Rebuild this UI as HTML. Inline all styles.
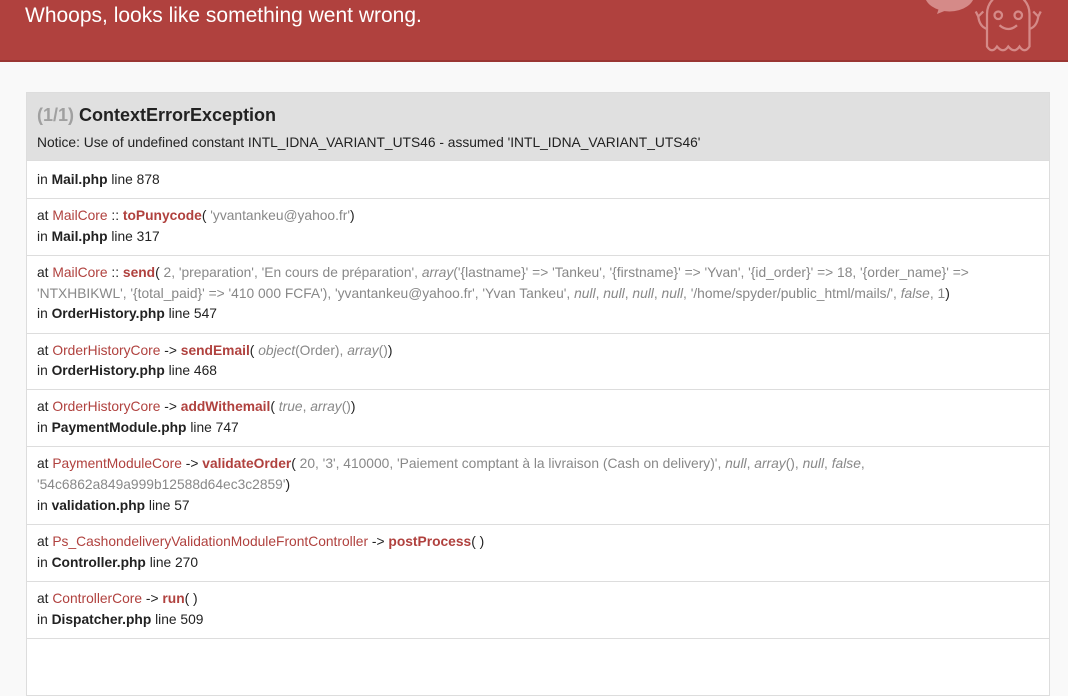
<!DOCTYPE html>
<html><head><meta charset="utf-8"><style>
body{margin:0;background:#f9f9f9;font-family:"Liberation Sans",Arial,sans-serif;color:#333;font-size:13.8px;overflow:hidden}
.hdr{height:60px;background:#b0413e;border-bottom:2px solid #9a3633;position:relative;overflow:hidden}
.hdr h1{margin:0;position:absolute;left:25px;top:4px;color:#fff;font-weight:normal;font-size:21px;line-height:24px}
.box{position:absolute;left:26px;top:92px;width:1022px;border:1px solid #ddd}
.top{background:#e0e0e0;padding:11px 10px 7px}
.top h2{margin:0;font-size:18px;line-height:22px;font-weight:bold;color:#222}
.top h2 span{color:#a0a0a0}
.top p{margin:7px 0 0;line-height:20px;color:#222}
.row{background:#fff;border-top:1px solid #ddd;padding:7px 10px 7.3px;line-height:20.8px;color:#222}
.row.f{padding:8px 10px 8px;line-height:21px}
.c{color:#b0413e}.m{color:#b0413e;font-weight:bold}.s{color:#888}.i{font-style:italic;color:#888}
b{color:#222}
</style></head><body>
<div class="hdr"><h1>Whoops, looks like something went wrong.</h1>
<svg style="position:absolute;left:922px;top:-16px" width="150" height="80" viewBox="0 0 120 64">
<ellipse cx="22" cy="8" rx="20" ry="14" fill="#d58a88"/><path d="M14 18 L12 24 L22 20z" fill="#d58a88"/>
<g fill="none" stroke="#d58a88" stroke-width="1.8"><path d="M52 50 V24 a17 17 0 0 1 34 0 V50 q-4 6 -8 0 q-4 6 -9 0 q-4 6 -9 0 q-4 6 -8 0z"/>
<circle cx="61" cy="25" r="3"/><circle cx="77" cy="25" r="3"/><path d="M62 33 q7 6 14 0"/>
<path d="M52 36 q-6 -2 -7 -10 M45 26 l-2 -4 M45 26 l4 -4"/><path d="M86 36 q6 -2 7 -10 M93 26 l2 -4 M93 26 l-4 -4"/></g></svg>
</div>
<div class="box">
<div class="top"><h2><span>(1/1)</span> ContextErrorException</h2><p>Notice: Use of undefined constant INTL_IDNA_VARIANT_UTS46 - assumed 'INTL_IDNA_VARIANT_UTS46'</p></div>
<div class="row f">in <b>Mail.php</b> line 878</div>
<div class="row">at <span class="c">MailCore</span> :: <span class="m">toPunycode</span>( <span class="s">'yvantankeu@yahoo.fr'</span>)<br>in <b>Mail.php</b> line 317</div>
<div class="row">at <span class="c">MailCore</span> :: <span class="m">send</span>( <span class="s">2, 'preparation', 'En cours de préparation', <i>array</i>('{lastname}' =&gt; 'Tankeu', '{firstname}' =&gt; 'Yvan', '{id_order}' =&gt; 18, '{order_name}' =&gt; 'NTXHBIKWL', '{total_paid}' =&gt; '410 000 FCFA'), 'yvantankeu@yahoo.fr', 'Yvan Tankeu', <i>null</i>, <i>null</i>, <i>null</i>, <i>null</i>, '/home/spyder/public_html/mails/', <i>false</i>, 1</span>)<br>in <b>OrderHistory.php</b> line 547</div>
<div class="row">at <span class="c">OrderHistoryCore</span> -&gt; <span class="m">sendEmail</span>( <span class="s"><i>object</i>(Order), <i>array</i>()</span>)<br>in <b>OrderHistory.php</b> line 468</div>
<div class="row">at <span class="c">OrderHistoryCore</span> -&gt; <span class="m">addWithemail</span>( <span class="s"><i>true</i>, <i>array</i>()</span>)<br>in <b>PaymentModule.php</b> line 747</div>
<div class="row">at <span class="c">PaymentModuleCore</span> -&gt; <span class="m">validateOrder</span>( <span class="s">20, '3', 410000, 'Paiement comptant à la livraison (Cash on delivery)', <i>null</i>, <i>array</i>(), <i>null</i>, <i>false</i>, '54c6862a849a999b12588d64ec3c2859'</span>)<br>in <b>validation.php</b> line 57</div>
<div class="row">at <span class="c">Ps_CashondeliveryValidationModuleFrontController</span> -&gt; <span class="m">postProcess</span>( )<br>in <b>Controller.php</b> line 270</div>
<div class="row">at <span class="c">ControllerCore</span> -&gt; <span class="m">run</span>( )<br>in <b>Dispatcher.php</b> line 509</div>
<div class="row">&nbsp;<br>&nbsp;</div>
</div>
</body></html>
